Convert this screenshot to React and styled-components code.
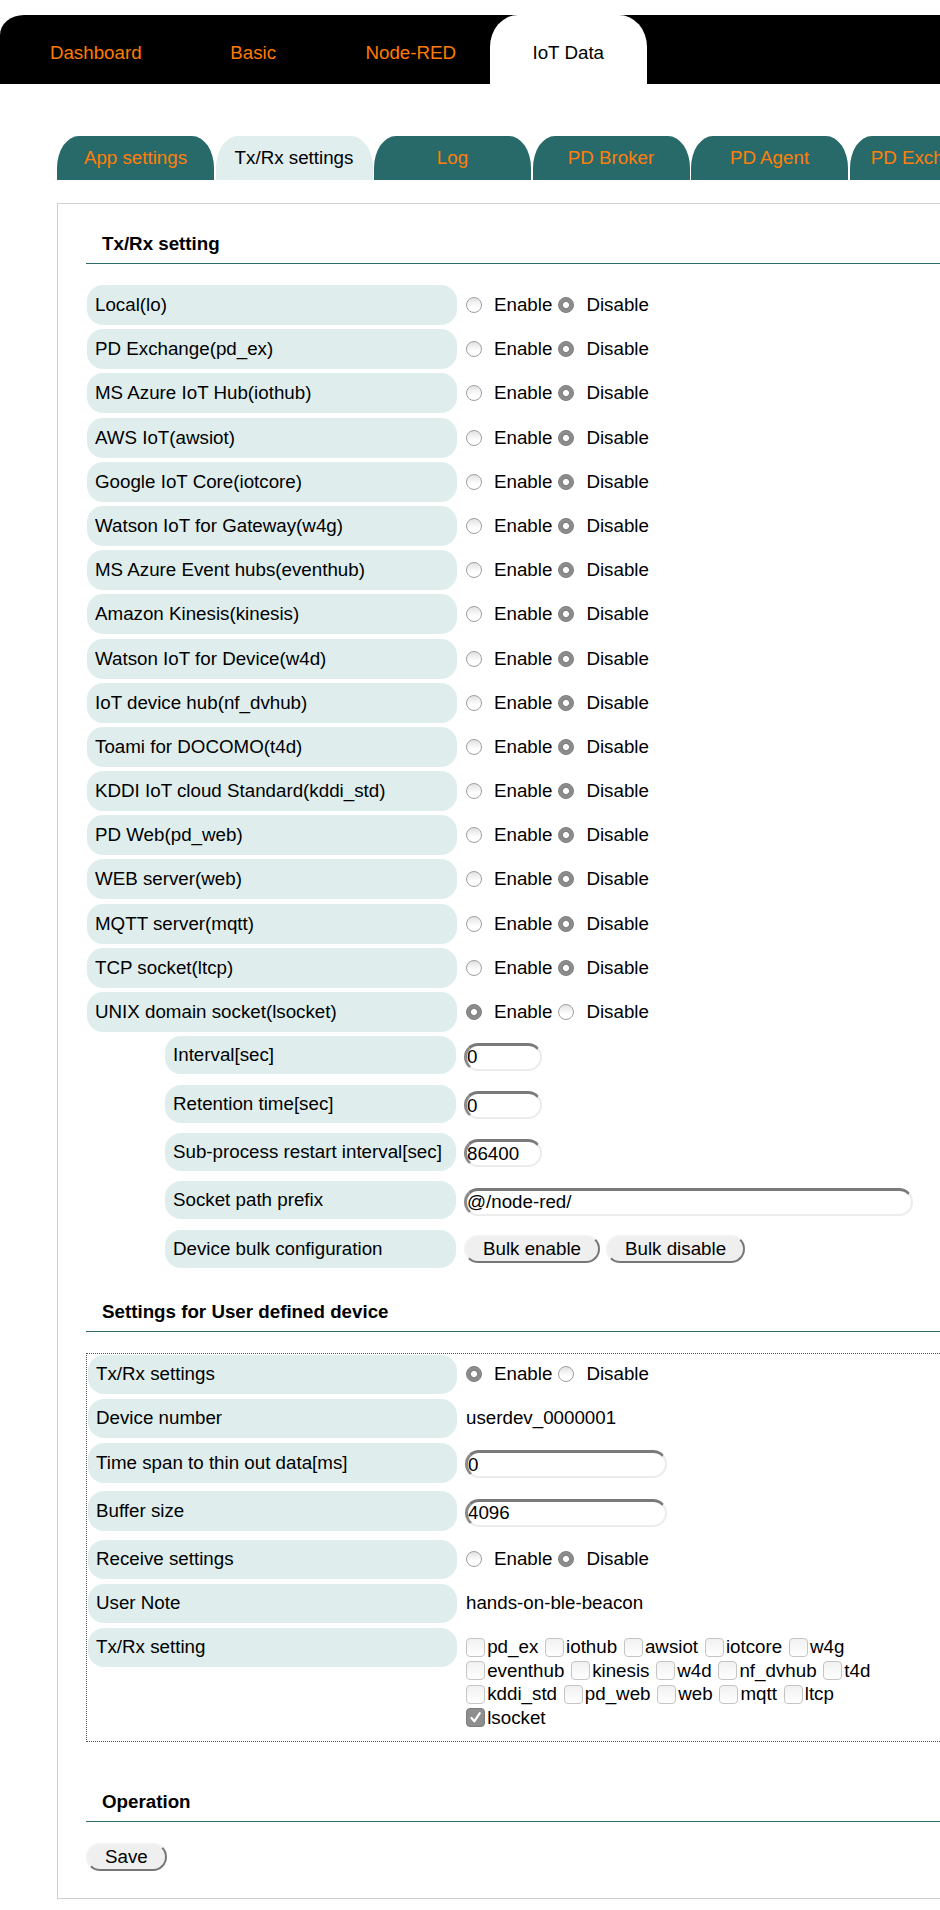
import React from 'react';
import styled, { createGlobalStyle, css } from 'styled-components';

const FONT = '"Liberation Sans", Arial, Helvetica, sans-serif';

const GlobalStyle = createGlobalStyle`
  html, body { margin: 0; padding: 0; background: #fff; overflow-x: hidden; }
  body { font-family: ${FONT}; font-size: 18.75px; color: #000; }
  * { box-sizing: border-box; }
`;

const Page = styled.div`
  width: 1100px;
  padding-top: 15px;
`;

const TopNav = styled.nav`
  display: flex;
  height: 69px;
  background: #000;
  border-top-left-radius: 24px 20px;
  padding-left: 17px;
`;

const TopTab = styled.div`
  flex: none;
  width: 157.5px;
  padding-top: 27px;
  text-align: center;
  line-height: 21px;
  color: ${(p) => (p.$active ? '#000' : '#ff7a00')};
  background: ${(p) => (p.$active ? '#fff' : 'transparent')};
  border-radius: 28px 28px 0 0 / 32px 32px 0 0;
`;

const SubTabs = styled.div`
  display: flex;
  gap: 1.5px;
  margin: 52px 0 0 57px;
`;

const SubTab = styled.div`
  flex: none;
  width: 157px;
  height: 44px;
  display: flex;
  align-items: center;
  justify-content: center;
  white-space: nowrap;
  border-radius: 22px 22px 0 0 / 32px 32px 0 0;
  background: ${(p) => (p.$active ? '#e0eeee' : '#276a69')};
  color: ${(p) => (p.$active ? '#000' : '#ff7f0a')};
`;

const Panel = styled.div`
  margin: 23px 0 0 57px;
  width: 1000px;
  border: 1px solid #cfcfcf;
  padding: 0 0 27px 29px;
`;

const SectionTitle = styled.h3`
  margin: ${(p) => p.$top}px 0 0 -1px;
  padding: 0 0 8px 16px;
  font-size: 18.75px;
  font-weight: bold;
  line-height: 21.5px;
  border-bottom: 1px solid #2d6c6a;
`;

const Table = styled.div`
  display: flex;
  flex-direction: column;
  margin-top: 21.5px;
`;

const UserBox = styled.div`
  display: flex;
  flex-direction: column;
  margin: 21px 0 0 -1px;
  padding: 1px 0 11px 1px;
  border: 1px dotted #555;
`;

const Row = styled.div`
  display: flex;
  align-items: ${(p) => (p.$top ? 'flex-start' : 'center')};
  margin-bottom: ${(p) => p.$gap}px;
  padding-left: ${(p) => (p.$indent ? 78 : 0)}px;
`;

const Label = styled.div`
  flex: none;
  width: ${(p) => p.$w}px;
  height: ${(p) => p.$h}px;
  display: flex;
  align-items: center;
  padding-left: 8px;
  background: #dfeeed;
  border-radius: 16px;
  white-space: nowrap;
`;

const Value = styled.div`
  margin-left: 9px;
  display: flex;
  align-items: center;
  white-space: nowrap;
  ${(p) =>
    p.$pad &&
    css`
      padding-top: ${p.$pad}px;
    `}
`;

const RadioDot = styled.span`
  flex: none;
  width: 16px;
  height: 16px;
  border-radius: 50%;
  margin-right: 12px;
  ${(p) =>
    p.$checked
      ? css`
          background: radial-gradient(circle, #fff 0 2.6px, #858585 3.4px, #9a9a9a 100%);
          border: 1px solid #7a7a7a;
        `
      : css`
          background: linear-gradient(#e2e2e2, #fff 65%);
          border: 1px solid #9f9f9f;
        `}
`;

const RadioText = styled.span`
  margin-right: 6px;
`;

const Input = styled.input`
  width: ${(p) => p.$w}px;
  height: 28px;
  margin: 3px 0 0 -1px;
  padding: 0 2px 0 0;
  border-style: solid;
  border-width: 3px 2px 2px 3px;
  border-color: #7a7a7a #ececec #ececec #8a8a8a;
  border-radius: 14px;
  background: #fff;
  font-family: ${FONT};
  font-size: 18.75px;
  color: #000;
  outline: none;
`;

const Button = styled.button`
  height: 28px;
  padding: 0 17px;
  margin-right: 6px;
  border-style: solid;
  border-width: 2px;
  border-color: #f2f2f2 #777 #777 #f2f2f2;
  border-radius: 14px;
  background: #efefef;
  font-family: ${FONT};
  font-size: 18.75px;
  color: #000;
  line-height: 22px;
  &:first-child {
    margin-left: -1px;
  }
`;

const SaveWrap = styled.div`
  margin-top: 21px;
`;

const Checks = styled.div`
  width: 430px;
  display: flex;
  flex-wrap: wrap;
  column-gap: 6.6px;
`;

const CheckItem = styled.label`
  display: flex;
  align-items: center;
  height: 23.5px;
`;

const CheckBox = styled.span`
  flex: none;
  width: 19px;
  height: 19px;
  margin-right: 2.2px;
  border-radius: 4px;
  display: flex;
  align-items: center;
  justify-content: center;
  ${(p) =>
    p.$checked
      ? css`
          background: #8e8e8e;
          border: 1px solid #7c7c7c;
        `
      : css`
          background: linear-gradient(#f1f1f1, #fff);
          border: 1px solid #c4c4c4;
        `}
`;

const services = [
  'Local(lo)',
  'PD Exchange(pd_ex)',
  'MS Azure IoT Hub(iothub)',
  'AWS IoT(awsiot)',
  'Google IoT Core(iotcore)',
  'Watson IoT for Gateway(w4g)',
  'MS Azure Event hubs(eventhub)',
  'Amazon Kinesis(kinesis)',
  'Watson IoT for Device(w4d)',
  'IoT device hub(nf_dvhub)',
  'Toami for DOCOMO(t4d)',
  'KDDI IoT cloud Standard(kddi_std)',
  'PD Web(pd_web)',
  'WEB server(web)',
  'MQTT server(mqtt)',
  'TCP socket(ltcp)',
  'UNIX domain socket(lsocket)',
];

const checks = [
  'pd_ex', 'iothub', 'awsiot', 'iotcore', 'w4g',
  'eventhub', 'kinesis', 'w4d', 'nf_dvhub', 't4d',
  'kddi_std', 'pd_web', 'web', 'mqtt', 'ltcp', 'lsocket',
];

function Radios({ enabled }) {
  return (
    <>
      <RadioDot $checked={enabled} />
      <RadioText>Enable</RadioText>
      <RadioDot $checked={!enabled} />
      <RadioText>Disable</RadioText>
    </>
  );
}

export default function App() {
  return (
    <Page>
      <GlobalStyle />
      <TopNav>
        <TopTab>Dashboard</TopTab>
        <TopTab>Basic</TopTab>
        <TopTab>Node-RED</TopTab>
        <TopTab $active>IoT Data</TopTab>
      </TopNav>

      <SubTabs>
        <SubTab>App settings</SubTab>
        <SubTab $active>Tx/Rx settings</SubTab>
        <SubTab>Log</SubTab>
        <SubTab>PD Broker</SubTab>
        <SubTab>PD Agent</SubTab>
        <SubTab>PD Exchange</SubTab>
      </SubTabs>

      <Panel>
        <SectionTitle $top={29}>Tx/Rx setting</SectionTitle>
        <Table>
          {services.map((s) => (
            <Row key={s} $gap={4.2}>
              <Label $w={370} $h={40}>{s}</Label>
              <Value>
                <Radios enabled={s === 'UNIX domain socket(lsocket)'} />
              </Value>
            </Row>
          ))}
          <Row $indent $gap={10.4}>
            <Label $w={291} $h={38}>Interval[sec]</Label>
            <Value><Input $w={78} defaultValue="0" /></Value>
          </Row>
          <Row $indent $gap={10.4}>
            <Label $w={291} $h={38}>Retention time[sec]</Label>
            <Value><Input $w={78} defaultValue="0" /></Value>
          </Row>
          <Row $indent $gap={10.4}>
            <Label $w={291} $h={38}>Sub-process restart interval[sec]</Label>
            <Value><Input $w={78} defaultValue="86400" /></Value>
          </Row>
          <Row $indent $gap={10.4}>
            <Label $w={291} $h={38}>Socket path prefix</Label>
            <Value><Input $w={449} defaultValue="@/node-red/" /></Value>
          </Row>
          <Row $indent $gap={10.4}>
            <Label $w={291} $h={38}>Device bulk configuration</Label>
            <Value>
              <Button>Bulk enable</Button>
              <Button>Bulk disable</Button>
            </Value>
          </Row>
        </Table>

        <SectionTitle $top={23}>Settings for User defined device</SectionTitle>
        <UserBox>
          <Row $gap={4.5}>
            <Label $w={369} $h={39.5}>Tx/Rx settings</Label>
            <Value><Radios enabled /></Value>
          </Row>
          <Row $gap={4.5}>
            <Label $w={369} $h={39.5}>Device number</Label>
            <Value>userdev_0000001</Value>
          </Row>
          <Row $gap={8.5}>
            <Label $w={369} $h={40}>Time span to thin out data[ms]</Label>
            <Value><Input $w={202} defaultValue="0" /></Value>
          </Row>
          <Row $gap={8.5}>
            <Label $w={369} $h={40}>Buffer size</Label>
            <Value><Input $w={202} defaultValue="4096" /></Value>
          </Row>
          <Row $gap={4.5}>
            <Label $w={369} $h={39.5}>Receive settings</Label>
            <Value><Radios enabled={false} /></Value>
          </Row>
          <Row $gap={4.5}>
            <Label $w={369} $h={39.5}>User Note</Label>
            <Value>hands-on-ble-beacon</Value>
          </Row>
          <Row $gap={0} $top>
            <Label $w={369} $h={39.5}>Tx/Rx setting</Label>
            <Value $pad={8}>
              <Checks>
                {checks.map((c) => {
                  const on = c === 'lsocket';
                  return (
                    <CheckItem key={c}>
                      <CheckBox $checked={on}>
                        {on && (
                          <svg width="13" height="13" viewBox="0 0 13 13">
                            <path d="M2.5 7 L5.3 10.3 L10.8 2.2" fill="none" stroke="#fff" strokeWidth="2.2" strokeLinecap="round" strokeLinejoin="round" />
                          </svg>
                        )}
                      </CheckBox>
                      {c}
                    </CheckItem>
                  );
                })}
              </Checks>
            </Value>
          </Row>
        </UserBox>

        <SectionTitle $top={49.4}>Operation</SectionTitle>
        <SaveWrap>
          <Button>Save</Button>
        </SaveWrap>
      </Panel>
    </Page>
  );
}
